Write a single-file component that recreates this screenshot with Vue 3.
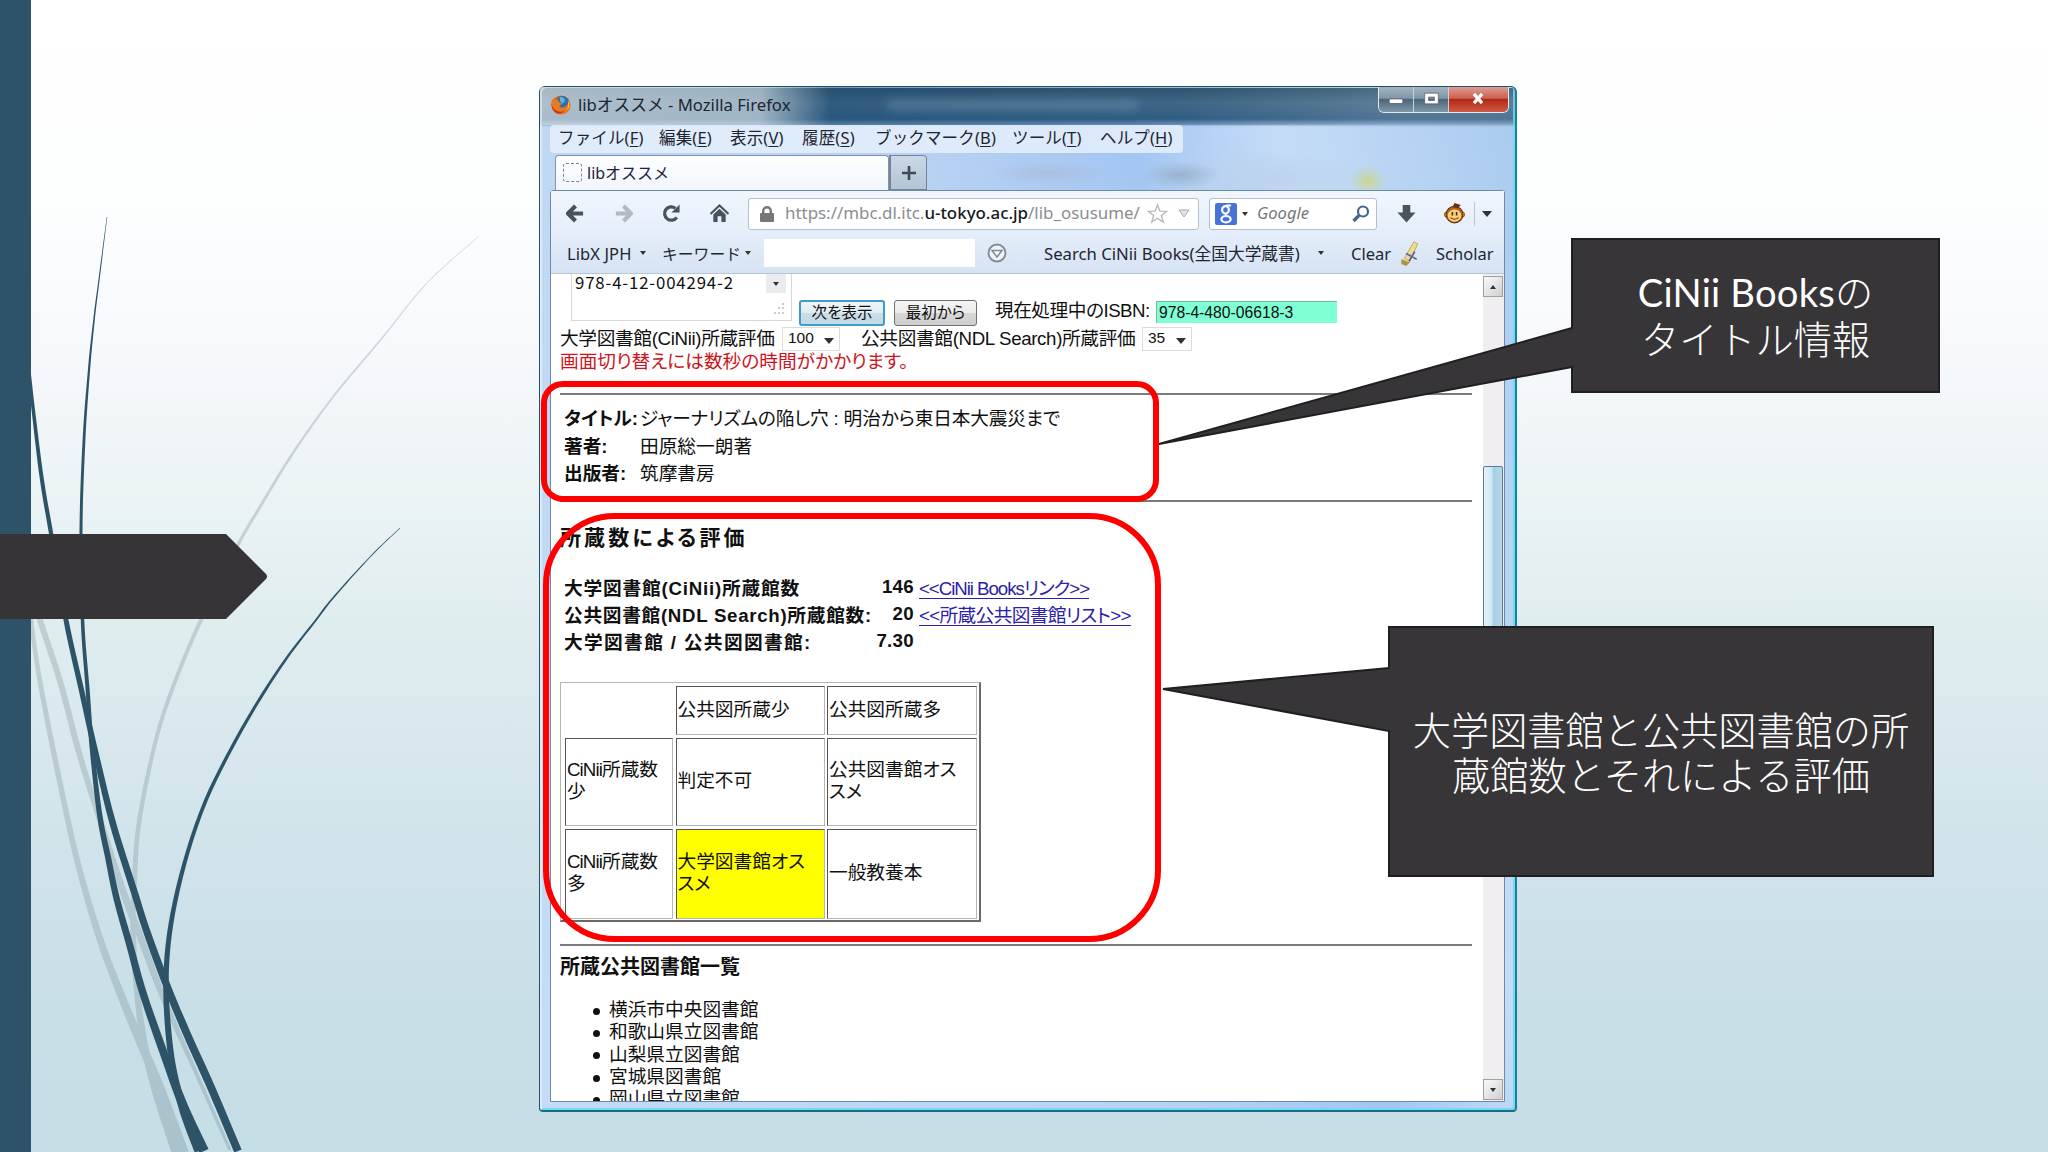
<script setup>
import { ref } from 'vue'

const menus = ref([
  { label: 'ファイル', key: 'F' },
  { label: '編集', key: 'E' },
  { label: '表示', key: 'V' },
  { label: '履歴', key: 'S' },
  { label: 'ブックマーク', key: 'B' },
  { label: 'ツール', key: 'T' },
  { label: 'ヘルプ', key: 'H' },
])

const libraries = ref([
  '横浜市中央図書館',
  '和歌山県立図書館',
  '山梨県立図書館',
  '宮城県図書館',
  '岡山県立図書館',
])

// each stem is a list of [x, y, thickness] along its centre line
const lightStems = [
  [[479, 236, 0.5], [427, 283, 1], [383, 337, 1.6], [333, 397, 2], [293, 453, 2.6], [260, 507, 3], [238, 545, 3.4], [201, 620, 4], [178, 674, 4], [160, 725, 4], [147, 779, 4.2], [138, 830, 4.6], [135, 871, 5], [133, 925, 5.5], [136, 980, 6], [143, 1037, 7], [155, 1088, 8], [178, 1153, 12]],
  [[31, 618, 4], [35, 650, 4.5], [43, 698, 5], [60, 783, 5.5], [78, 864, 6], [100, 939, 7], [123, 1000, 8], [143, 1048, 9], [160, 1088, 9], [184, 1153, 10]],
  [[33, 592, 5], [40, 620, 6], [60, 681, 6], [80, 756, 6], [100, 820, 6], [123, 891, 7], [140, 936, 7], [163, 997, 6], [197, 1075, 4], [230, 1150, 3]],
]
const darkStems = [
  [[107, 217, 0.5], [99, 280, 1.2], [94, 320, 1.6], [89, 370, 2.2], [84, 440, 2.8], [81, 530, 3], [82.5, 620, 3.5], [87.5, 688, 4], [92, 749, 4.5], [100, 817, 5.4], [108, 857, 6], [116.5, 898, 6.5], [130, 946, 7], [143, 993, 7.5], [163, 1051, 8], [183, 1105, 9], [204, 1151, 10]],
  [[29, 370, 3], [34, 416, 3.5], [42, 480, 4], [51, 533, 4.3], [66, 620, 5], [81, 688, 5.4], [97, 759, 6], [113, 824, 6.6], [134, 891, 7], [147, 932, 7.2], [167, 986, 7.5], [187, 1034, 7.8], [210, 1085, 8], [238, 1151, 8]],
  [[400, 528, 0.5], [370, 557, 1], [333, 598, 1.7], [316, 620, 2], [286, 659, 2.5], [256, 705, 3], [230, 751, 3.3], [206, 800, 3.6], [188, 851, 4], [175, 902, 4.5], [168, 946, 5], [166, 986, 5.5], [168, 1027, 6], [173, 1068, 6.5], [183, 1109, 8], [199, 1151, 9]],
]

function smooth(pts) {
  let d = ''
  for (let i = 0; i < pts.length - 1; i++) {
    const p0 = pts[i - 1] || pts[i]
    const p1 = pts[i]
    const p2 = pts[i + 1]
    const p3 = pts[i + 2] || p2
    d += `C${p1[0] + (p2[0] - p0[0]) / 6} ${p1[1] + (p2[1] - p0[1]) / 6} `
    d += `${p2[0] - (p3[0] - p1[0]) / 6} ${p2[1] - (p3[1] - p1[1]) / 6} ${p2[0]} ${p2[1]}`
  }
  return d
}

function stemPath(stem) {
  const left = []
  const right = []
  stem.forEach(([x, y, w], i) => {
    const a = stem[i - 1] || stem[i]
    const b = stem[i + 1] || stem[i]
    const len = Math.hypot(b[0] - a[0], b[1] - a[1])
    const nx = (-(b[1] - a[1]) / len) * (w / 2)
    const ny = ((b[0] - a[0]) / len) * (w / 2)
    left.push([x + nx, y + ny])
    right.unshift([x - nx, y - ny])
  })
  return `M${left[0]}${smooth(left)}L${right[0]}${smooth(right)}Z`
}
</script>

<template>
  <main class="slide">
    <svg class="decor" viewBox="0 0 2048 1152">
      <defs>
        <linearGradient id="pale" gradientUnits="userSpaceOnUse" x1="0" y1="230" x2="0" y2="1152">
          <stop offset="0" stop-color="#d5d9dc" />
          <stop offset="0.5" stop-color="#bccdd1" />
          <stop offset="1" stop-color="#a9c2cc" />
        </linearGradient>
      </defs>
      <path v-for="(s, i) in lightStems" :key="i" :d="stemPath(s)" fill="url(#pale)" />
      <path v-for="(s, i) in darkStems" :key="i" :d="stemPath(s)" fill="#2c5367" />
      <rect width="31" height="1152" fill="#2e5267" />
      <path d="M0 534H226L266 574Q268 576.500 266 579L226 619H0Z" fill="#363436" />
    </svg>

    <section class="window">
      <header class="titlebar">
        <svg class="fox" viewBox="0 0 20 20">
          <circle cx="10" cy="10" r="9.500" fill="#e2661b" />
          <circle cx="11.500" cy="7.500" r="6.500" fill="#2b6fae" />
          <path d="M9 2Q14 2 14 6L11 9Q8 6 9 2Z" fill="#5cb3dc" />
          <path d="M1 4Q3 5 5 4Q8 5 8 7L11 9Q8 10 9 12Q13 14 17 9Q18 7 17 4Q21 9 18 15Q13 21 6 18Q-1 14 1 4Z" fill="#ea7a20" />
          <path d="M1 6Q0 13 6 16Q11 18 15 15Q10 20 5 18Q-1 14 1 6Z" fill="#c8371b" />
          <path d="M17 6Q20 11 16 15Q18 11 17 6Z" fill="#ffd64a" />
        </svg>
        <span class="title">libオススメ - Mozilla Firefox</span>
        <span class="ghost"></span>
        <div class="controls">
          <span class="ctl"><svg viewBox="0 0 35 22"><rect x="10.500" y="11" width="14" height="4.500" fill="#fff" stroke="#556" stroke-width=".7" /></svg></span>
          <span class="ctl"><svg viewBox="0 0 35 22"><path d="M11 5H25V16H11ZM15 9V12.500H21V9Z" fill="#fff" fill-rule="evenodd" stroke="#556" stroke-width=".7" /></svg></span>
          <span class="ctl close"><svg viewBox="0 0 58 22"><path d="M24.500 6L32.500 15M32.500 6L24.500 15" stroke="#fff" stroke-width="3.200" /></svg></span>
        </div>
      </header>

      <nav class="menubar">
        <span v-for="m in menus" :key="m.key">{{ m.label }}(<u>{{ m.key }}</u>)</span>
      </nav>

      <div class="tabs">
        <div class="tab">
          <i class="favicon"></i>
          <span>libオススメ</span>
        </div>
        <div class="new-tab">
          <svg viewBox="0 0 14 14"><path d="M7 0V14M0 7H14" stroke="#3f4a55" stroke-width="2.600" /></svg>
        </div>
      </div>

      <div class="panel">
        <div class="navbar">
          <svg class="ico" viewBox="0 0 20 20"><path d="M10 2L2 10L10 18M3 10H18" fill="none" stroke="#47525e" stroke-width="4.400" /></svg>
          <svg class="ico" viewBox="0 0 20 20"><path d="M10 2L18 10L10 18M17 10H2" fill="none" stroke="#b3b9c1" stroke-width="4.400" /></svg>
          <svg class="ico" viewBox="0 0 20 20">
            <path d="M15.500 14A7 7 0 1 1 14 4.500" fill="none" stroke="#47525e" stroke-width="3.400" />
            <path d="M18.500 0.500V9H10Z" fill="#47525e" />
          </svg>
          <svg class="ico" viewBox="0 0 20 20">
            <path d="M0.500 10.500L10 1.500L19.500 10.500" fill="none" stroke="#47525e" stroke-width="2.200" />
            <path d="M3.500 11L10 5L16.500 11V19H12V13H8V19H3.500Z" fill="#47525e" />
          </svg>
          <div class="url">
            <svg class="lock" viewBox="0 0 14 16"><path d="M3.200 8V5A3.800 3.800 0 0 1 10.800 5V8" fill="none" stroke="#777" stroke-width="2.400" /><rect y="7" width="14" height="9" rx="1" fill="#777" /></svg>
            <span class="addr">https://mbc.dl.itc.<b>u-tokyo.ac.jp</b>/lib_osusume/</span>
            <svg class="star" viewBox="0 0 22 22"><path d="M11 2L13.500 8.500L20.500 8.800L15 13L17 20L11 16L5 20L7 13L1.500 8.800L8.500 8.500Z" fill="#fff" stroke="#bbb" stroke-width="1.500" /></svg>
            <svg class="drop" viewBox="0 0 12 9"><path d="M1 1H11L6 8Z" fill="#e4e4e4" stroke="#aaa" /></svg>
          </div>
          <div class="search">
            <svg class="g" viewBox="0 0 22 22">
              <rect width="22" height="22" rx="2" fill="#4673d8" />
              <ellipse cx="10.500" cy="6.800" rx="3.400" ry="3.700" fill="none" stroke="#fff" stroke-width="2.200" />
              <path d="M11 2.500H16M12 10Q9 11.500 12 13" fill="none" stroke="#fff" stroke-width="1.800" />
              <ellipse cx="11" cy="16.200" rx="4.600" ry="3.200" fill="none" stroke="#fff" stroke-width="2.200" />
            </svg>
            <i class="caret small"></i>
            <em>Google</em>
            <svg class="glass" viewBox="0 0 18 18"><circle cx="11" cy="6.500" r="5" fill="none" stroke="#456488" stroke-width="2.200" /><path d="M7 10.500L1.500 16" stroke="#456488" stroke-width="3.200" /></svg>
          </div>
          <svg class="ico" viewBox="0 0 20 20"><path d="M6 1H14V9H19.500L10 19.500L0.500 9H6Z" fill="#4a545f" /></svg>
          <svg class="ico" viewBox="0 0 20 20">
            <circle cx="3" cy="11" r="2.600" fill="#e9a23a" stroke="#6a3b10" stroke-width=".8" />
            <circle cx="17" cy="11" r="2.600" fill="#e9a23a" stroke="#6a3b10" stroke-width=".8" />
            <circle cx="10" cy="11" r="8" fill="#b4641c" stroke="#5d3209" />
            <path d="M8 4L10 0L16 2L13 5Z" fill="#6a2f16" />
            <ellipse cx="10" cy="12" rx="6.500" ry="5.800" fill="#fbd077" />
            <path d="M8 8.500V12M12 8.500V12" stroke="#332" stroke-width="1.500" />
            <path d="M6 14Q10 17 14 14" fill="none" stroke="#7a4210" />
          </svg>
          <div class="more"><i class="caret"></i></div>
        </div>

        <div class="libx">
          <span class="jph">LibX JPH</span>
          <i class="caret small"></i>
          <span class="kw">キーワード</span>
          <i class="caret small"></i>
          <div class="field"></div>
          <svg class="ring" viewBox="0 0 20 20"><circle cx="10" cy="10" r="8.500" fill="#eef3f8" stroke="#7f8a96" stroke-width="1.800" /><path d="M5 7.500H15L10 14Z" fill="#fff" stroke="#7f8a96" stroke-width="1.500" /></svg>
          <span class="cinii">Search CiNii Books(全国大学蔵書)</span>
          <i class="caret small"></i>
          <span>Clear</span>
          <svg class="scroll" viewBox="0 0 20 28">
            <path d="M14 2L18 4L10 22L4 19Z" fill="#eddc94" stroke="#b49a48" stroke-width=".8" />
            <path d="M1 20L10 23L6 27L1 25Z" fill="#a99a35" />
            <path d="M6 14L17 20M15 12L9 22" stroke="#6a6390" stroke-width="1.800" />
          </svg>
          <span>Scholar</span>
        </div>

        <div class="view">
          <div class="page">
            <div class="form-row">
              <div class="textarea">
                <span>978-4-12-004294-2</span>
                <div class="ta-side">
                  <div class="ta-btn"><i class="caret small"></i></div>
                  <svg class="grip" viewBox="0 0 12 12"><path d="M9 0h2v2h-2zM5 4h2v2h-2zM9 4h2v2h-2zM1 9h2v2h-2zM5 9h2v2h-2zM9 9h2v2h-2z" fill="#ccc" /></svg>
                </div>
              </div>
              <button class="btn primary">次を表示</button>
              <button class="btn">最初から</button>
              <span class="isbn-label">現在処理中のISBN:</span>
              <div class="isbn">978-4-480-06618-3</div>
            </div>
            <div class="select-row">
              <span class="l1">大学図書館(CiNii)所蔵評価</span>
              <div class="select">100<i class="caret"></i></div>
              <span class="l2">公共図書館(NDL Search)所蔵評価</span>
              <div class="select narrow">35<i class="caret"></i></div>
            </div>
            <p class="warn">画面切り替えには数秒の時間がかかります。</p>

            <div class="rule"></div>
            <div class="book">
              <b class="tight">タイトル:</b><span class="book-title">ジャーナリズムの陥し穴 : 明治から東日本大震災まで</span>
              <b>著者:</b><span>田原総一朗著</span>
              <b>出版者:</b><span>筑摩書房</span>
            </div>
            <div class="rule"></div>

            <h3 class="score-head">所蔵数による評価</h3>
            <div class="scores">
              <b class="s1">大学図書館(CiNii)所蔵館数</b><b class="num">146</b><a class="a1">&lt;&lt;CiNii Booksリンク&gt;&gt;</a>
              <b class="s2">公共図書館(NDL Search)所蔵館数:</b><b class="num">20</b><a class="a2">&lt;&lt;所蔵公共図書館リスト&gt;&gt;</a>
              <b class="s3">大学図書館 / 公共図図書館:</b><b class="num">7.30</b><span></span>
            </div>

            <div class="matrix">
              <div class="cell blank"></div>
              <div class="cell">公共図所蔵少</div>
              <div class="cell">公共図所蔵多</div>
              <div class="cell"><p><span class="lat">CiNii</span>所蔵数<br>少</p></div>
              <div class="cell">判定不可</div>
              <div class="cell"><p>公共図書館オス<br>スメ</p></div>
              <div class="cell"><p><span class="lat">CiNii</span>所蔵数<br>多</p></div>
              <div class="cell hit"><p>大学図書館オス<br>スメ</p></div>
              <div class="cell">一般教養本</div>
            </div>

            <div class="rule"></div>
            <h4 class="list-head">所蔵公共図書館一覧</h4>
            <ul>
              <li v-for="name in libraries" :key="name">{{ name }}</li>
            </ul>
          </div>
          <div class="scrollbar">
            <div class="sb-btn"><i class="caret small up"></i></div>
            <div class="thumb"></div>
            <div class="sb-btn"><i class="caret small"></i></div>
          </div>
        </div>
      </div>
    </section>

    <div class="mark mark-title"></div>
    <div class="mark mark-score"></div>

    <svg class="decor" viewBox="0 0 2048 1152">
      <g fill="#373537" stroke="#1f1f21" stroke-width="2">
        <path d="M1572 239H1939V392H1572V367L1159 444L1572 328Z" />
        <path d="M1389 627H1933V876H1389V731L1163 689L1389 668Z" />
      </g>
    </svg>
    <div class="callout c1"><p><span class="latin">CiNii Books</span>の<br>タイトル情報</p></div>
    <div class="callout c2"><p>大学図書館と公共図書館の所<br>蔵館数とそれによる評価</p></div>
  </main>
</template>

<style>
body {
  margin: 0;
  overflow: hidden;
}
</style>

<style scoped>
* {
  box-sizing: border-box;
}

p,
h3,
h4,
ul {
  margin: 0;
  padding: 0;
}

.slide {
  position: relative;
  width: 2048px;
  height: 1152px;
  overflow: hidden;
  white-space: nowrap;
  background: linear-gradient(#ffffff 0%, #fdfefe 17%, #f6f8fc 31%, #ebf3f5 43%, #e0edef 54%, #d5e6ec 68%, #cbe0e7 82%, #c5dde5 100%);
}

.decor {
  position: absolute;
  left: 0;
  top: 0;
  width: 2048px;
  height: 1152px;
}

.window {
  position: absolute;
  left: 539px;
  top: 86px;
  width: 978px;
  height: 1026px;
  padding: 0 10px 8px 10px;
  border: 1px solid #24506a;
  border-right: 2px solid #1a7f9a;
  border-bottom: 2px solid #1b6b85;
  border-radius: 6px 6px 4px 4px;
  box-shadow: inset 2px 1px 0 #d9ecf8, inset -2px -2px 0 #6fdcf5;
  background:
    linear-gradient(#33566f 0px, #52748e 16px, #3d668d 32px, transparent 40px),
    radial-gradient(18px 16px at 828px 94px, #c9d595, transparent),
    radial-gradient(40px 14px at 640px 88px, #98b3d0, transparent),
    radial-gradient(60px 12px at 510px 86px, #a9bfdf, transparent),
    radial-gradient(120px 30px at 720px 92px, #bdd3ec, transparent),
    linear-gradient(75deg, #c4dcf5 0%, #b9d2f2 50%, #a3c6f2 68%, #c5dcf7 80%, #a9cbee 100%);
  font-family: "Noto Sans", "Noto Sans CJK JP", sans-serif;
  font-size: 17px;
  color: #1d2530;
  display: flex;
  flex-direction: column;
}

.titlebar {
  height: 38px;
  flex: none;
  margin: 0 -10px;
  padding: 0 0 3px 11px;
  display: flex;
  align-items: center;
  background: linear-gradient(90deg, rgba(205, 216, 224, 0.75) 0, rgba(190, 205, 216, 0.75) 220px, rgba(20, 70, 110, 0.5) 290px, rgba(20, 70, 110, 0.3) 640px, rgba(120, 150, 170, 0.3) 850px);
}

.fox {
  width: 20px;
  height: 20px;
}

.title {
  width: 290px;
  margin-left: 7px;
  padding-bottom: 2px;
  font-size: 16.7px;
}

.ghost {
  width: 250px;
  height: 10px;
  margin-left: 20px;
  background: #8fb2cc;
  opacity: 0.3;
  filter: blur(5px);
}

.controls {
  margin-left: auto;
  margin-right: 6px;
  align-self: flex-start;
  display: flex;
  width: 131px;
  height: 26px;
  border: 1px solid #dde8ef;
  border-top: none;
  border-radius: 0 0 6px 6px;
  overflow: hidden;
}

.ctl {
  width: 35px;
  border-right: 1px solid #c6d2da;
  background: linear-gradient(#a4b4bf, #8296a5 45%, #4c667a 50%, #8098a8);
}

.ctl svg {
  display: block;
  height: 24px;
  width: 100%;
}

.ctl.close {
  flex: 1;
  border: none;
  background: linear-gradient(#dc9c92, #cd6050 45%, #b02817 50%, #d25a44);
}

.menubar {
  flex: none;
  width: 633px;
  height: 28px;
  display: grid;
  grid-template-columns: 101px 71px 72px 73px 137px 88px 80px;
  align-items: center;
  padding-left: 8px;
  padding-bottom: 4px;
  border-radius: 4px;
  background: rgba(232, 241, 252, 0.8);
  font-size: 16.5px;
}

.menubar span {
  letter-spacing: 0.15px;
}

.menubar u {
  text-underline-offset: 2px;
}

.tabs {
  flex: none;
  height: 37px;
  padding: 2px 0 0 5px;
  display: flex;
  align-items: stretch;
}

.tab {
  width: 334px;
  padding-left: 7px;
  padding-bottom: 2px;
  display: flex;
  align-items: center;
  border: 1px solid #8494a8;
  border-bottom: none;
  border-radius: 4px 4px 0 0;
  background: linear-gradient(#fdfeff, #f1f6fd);
  font-size: 16px;
}

.favicon {
  width: 19px;
  height: 19px;
  margin-right: 5px;
  border: 1.5px dashed #7c8593;
  border-radius: 3px;
}

.new-tab {
  width: 38px;
  display: flex;
  align-items: center;
  justify-content: center;
  border: 1px solid #73859a;
  border-left-width: 2px;
  border-radius: 0 4px 0 0;
  background: linear-gradient(#cbd8e6, #b2c4d6);
}

.new-tab svg {
  width: 14px;
}

.panel {
  flex: 1;
  min-height: 0;
  display: flex;
  flex-direction: column;
  border: 1px solid #6c89a8;
  border-radius: 3px 3px 0 0;
  background: #fff;
}

.navbar {
  flex: none;
  height: 45px;
  display: grid;
  grid-template-columns: 48px 48px 48px 38px 461px 168px 58px 39px 30px;
  align-items: center;
  padding-left: 15px;
  background: linear-gradient(#f1f6fd, #e3edf9);
}

.ico {
  width: 19px;
  height: 19px;
}

.url,
.search {
  height: 32px;
  display: flex;
  align-items: center;
  border: 1px solid #b4c0ce;
  border-radius: 3px;
  background: #fff;
}

.url {
  width: 451px;
  padding-left: 11px;
}

.lock {
  width: 14px;
  height: 16px;
}

.addr {
  width: 362px;
  margin-left: 11px;
  padding-bottom: 2px;
  color: #8a8d91;
  font-size: 16.9px;
}

.addr b {
  font-weight: 500;
  color: #16181b;
}

.star {
  width: 21px;
  height: 21px;
}

.drop {
  width: 12px;
  margin-left: 10px;
}

.search {
  width: 168px;
  padding-left: 5px;
}

.g {
  width: 22px;
  height: 22px;
}

.search .caret {
  margin: 0 9px 0 5px;
}

.search em {
  width: 95px;
  padding-bottom: 2px;
  color: #77797c;
  font-size: 16.6px;
}

.glass {
  width: 18px;
}

.search + .ico {
  margin-left: 20px;
}

.search + .ico + .ico {
  margin-left: 9px;
  width: 21px;
  height: 21px;
}

.more {
  height: 24px;
  display: flex;
  align-items: center;
  padding-left: 7px;
  border-left: 1px solid #b9c5d3;
}

.caret {
  display: block;
  width: 0;
  height: 0;
  border: 5px solid transparent;
  border-top: 6px solid #2b323a;
  border-bottom: none;
}

.caret.small {
  border-width: 4px 3.5px 0;
}

.caret.up {
  transform: rotate(180deg);
}

.libx {
  flex: none;
  height: 38px;
  display: grid;
  grid-template-columns: 73px 22px 83px 19px 223px 57px 274px 33px 49px 36px 60px;
  align-items: center;
  padding-left: 16px;
  padding-bottom: 3px;
  border-bottom: 1px solid #b9c6d6;
  background: linear-gradient(#e3edf9, #d6e3f3);
  font-size: 16.5px;
}

.libx .jph {
  letter-spacing: 0.1px;
}

.libx .kw {
  font-size: 15.8px;
}

.libx .cinii {
  font-size: 16.7px;
}

.field {
  width: 211px;
  height: 28px;
  background: #fff;
}

.ring {
  width: 20px;
}

.scroll {
  width: 20px;
  height: 27px;
}

.view {
  flex: 1;
  min-height: 0;
  display: flex;
  overflow: hidden;
  background: #fff;
}

.page {
  flex: 1;
  padding-left: 9px;
  color: #101010;
  font-family: "Liberation Sans", "Noto Sans CJK JP", sans-serif;
  font-size: 18.7px;
  font-weight: 400;
  font-feature-settings: "palt";
}

.form-row {
  height: 53px;
  display: flex;
  align-items: flex-end;
  padding-left: 11px;
}

.textarea {
  width: 221px;
  height: 47px;
  margin-bottom: 6px;
  margin-right: 7px;
  padding-left: 3px;
  display: flex;
  justify-content: space-between;
  border: 1px solid #d8d8d8;
  border-top: none;
  font: 16.8px/17px "Noto Sans CJK JP", sans-serif;
  letter-spacing: 0.85px;
}

.ta-side {
  display: flex;
  flex-direction: column;
  justify-content: space-between;
  padding: 0 5px 5px 0;
}

.ta-btn {
  width: 20px;
  height: 19px;
  display: flex;
  align-items: center;
  justify-content: center;
  background: #ececee;
}

.grip {
  width: 12px;
  margin-left: 7px;
}

.btn {
  width: 83px;
  height: 26px;
  margin: 0 0 1px;
  padding: 0;
  border: 1px solid #707070;
  border-radius: 3px;
  background: linear-gradient(#f4f4f4, #ebebeb 48%, #d6d6d6 52%, #cfcfcf);
  font-family: inherit;
  font-size: 15.5px;
  line-height: 22px;
  font-feature-settings: "palt";
  color: #111;
}

.btn.primary {
  width: 86px;
  margin-right: 9px;
  border: 2px solid #3f9cc4;
  background: linear-gradient(#eef5f8, #e0edf3 48%, #cbdde5 52%, #c0dbe8);
}

.isbn-label {
  width: 161px;
  height: 30px;
  margin-left: 18px;
  line-height: 28px;
  letter-spacing: -0.5px;
}

.isbn {
  width: 181px;
  height: 22px;
  margin-bottom: 4px;
  padding-left: 2px;
  border-top: 1px solid #7bb8a0;
  border-left: 1px solid #7bb8a0;
  background: #7fffd4;
  font-size: 15.7px;
  line-height: 21px;
}

.select-row {
  height: 24px;
  display: flex;
  align-items: center;
}

.l1,
.l2 {
  padding-bottom: 6px;
  letter-spacing: -0.35px;
}

.l1 {
  width: 222px;
}

.l2 {
  width: 281px;
  margin-left: 21px;
}

.select {
  width: 58px;
  height: 24px;
  padding: 0 5px 2px;
  display: flex;
  align-items: center;
  justify-content: space-between;
  border: 1px solid #dcdcdc;
  font-size: 15.5px;
}

.select.narrow {
  width: 50px;
}

.select .caret {
  margin-top: 5px;
}

.warn {
  height: 22px;
  line-height: 22px;
  color: #cc1420;
}

.rule {
  width: 912px;
  height: 2px;
  margin-top: 20px;
  background: #7b7b7d;
}

.book {
  display: grid;
  grid-template-columns: 76px 1fr;
  grid-auto-rows: 27.5px;
  align-items: center;
  margin-top: 8px;
  padding-left: 4px;
}

.book b,
.scores b {
  font-weight: 700;
}

.book-title {
  letter-spacing: -0.15px;
}

.book + .rule {
  margin-top: 14.5px;
}

.score-head {
  height: 28px;
  margin-top: 22px;
  font-size: 21px;
  line-height: 28px;
  letter-spacing: 3.1px;
}

.scores {
  display: grid;
  grid-template-columns: 307px 40px 1fr;
  column-gap: 3px;
  grid-auto-rows: 27px;
  align-items: center;
  margin-top: 21px;
  padding-left: 4px;
}

.scores a {
  justify-self: start;
  margin-left: 2px;
  color: #2b22a8;
  text-decoration: underline;
  text-underline-offset: 3px;
}

.s1 {
  letter-spacing: 0.8px;
}

.s2 {
  letter-spacing: 0.7px;
}

.s3 {
  letter-spacing: 1.35px;
}

.num {
  justify-self: end;
  letter-spacing: 0.3px;
}

.a1 {
  letter-spacing: -1.05px;
}

.a2 {
  letter-spacing: -0.65px;
}

.matrix {
  width: 421px;
  height: 240px;
  margin-top: 28px;
  display: grid;
  grid-template-columns: 108px 149px 150px;
  grid-template-rows: 49px 88px 90px;
  gap: 3px 2.5px;
  padding: 3px 3px 2px 4px;
  border: 1px solid #b5b5b5;
  border-right: 2px solid #6a6a6a;
  border-bottom: 2px solid #6a6a6a;
}

.cell {
  display: flex;
  align-items: center;
  padding-left: 1px;
  padding-bottom: 2px;
  border: 1px solid #b5b5b5;
  border-top-color: #555;
  border-left-color: #555;
  line-height: 22px;
}

.cell.blank {
  border-color: transparent;
}

.cell.hit {
  background: #ffff00;
}

.lat {
  letter-spacing: -0.9px;
}

.matrix + .rule {
  margin-top: 22px;
}

.list-head {
  height: 26px;
  margin-top: 8px;
  font-size: 20px;
  line-height: 26px;
}

ul {
  margin-top: 19px;
  padding-left: 33px;
  list-style: none;
}

li {
  height: 22.3px;
  display: flex;
  align-items: center;
  line-height: 22.3px;
}

li::before {
  content: "";
  width: 7px;
  height: 7px;
  margin-right: 9px;
  margin-top: 2px;
  border-radius: 50%;
  background: #111;
}

.scrollbar {
  width: 21px;
  display: flex;
  flex-direction: column;
  background: #f0eef0;
  padding: 2px 1px 1px 0;
}

.sb-btn {
  height: 21px;
  display: flex;
  align-items: center;
  justify-content: center;
  border: 1px solid #a0a0a0;
  background: linear-gradient(135deg, #fafafa, #cfcfcf);
}

.thumb {
  height: 290px;
  margin: 169px 0 auto;
  border: 1px solid #5a7a90;
  border-radius: 2px;
  background: linear-gradient(90deg, #e4f3fb, #cde6f2 45%, #a5cfe4 50%, #b5d8ea);
}

.mark {
  position: absolute;
  border: 6px solid #ff0000;
}

.mark-title {
  left: 541px;
  top: 381px;
  width: 618px;
  height: 121px;
  border-radius: 22px;
}

.mark-score {
  left: 543px;
  top: 513px;
  width: 618px;
  height: 429px;
  border-radius: 72px;
}

.callout {
  position: absolute;
  display: flex;
  align-items: center;
  justify-content: center;
  text-align: center;
  color: #fff;
  font-family: "Noto Sans CJK JP", sans-serif;
  font-weight: 200;
  font-size: 38.2px;
  line-height: 45px;
}

.latin {
  font-family: Lato, sans-serif;
  font-weight: 400;
  letter-spacing: 0.2px;
}

.c1 {
  left: 1571px;
  top: 238px;
  width: 369px;
  height: 155px;
  padding-bottom: 4px;
}

.c2 {
  left: 1388px;
  top: 626px;
  width: 546px;
  height: 251px;
  padding-bottom: 2px;
}
</style>
